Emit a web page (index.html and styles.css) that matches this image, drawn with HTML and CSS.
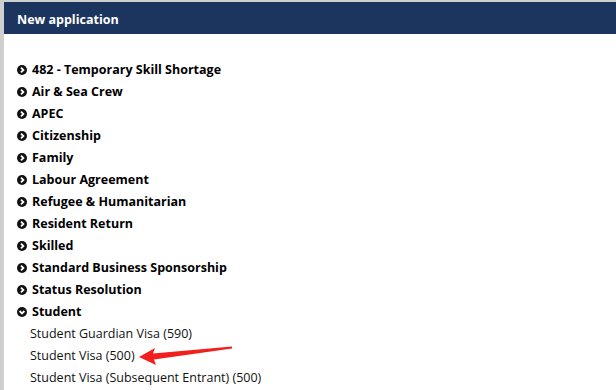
FILE: index.html
```html
<!DOCTYPE html>
<html lang="en">
<head>
    <meta charset="UTF-8">
    <title>New application</title>
    <link rel="stylesheet" href="styles.css">
</head>
<body>
<div id="panel">
    <div class="head">New application</div>
    <ul class="groups">
        <li><span class="ico"><svg viewBox="0 0 10 10"><circle cx="5" cy="5" r="5"/><path d="M4 2.6 6.4 5 4 7.4"/></svg></span>482 - Temporary Skill Shortage</li>
        <li><span class="ico"><svg viewBox="0 0 10 10"><circle cx="5" cy="5" r="5"/><path d="M4 2.6 6.4 5 4 7.4"/></svg></span>Air &amp; Sea Crew</li>
        <li><span class="ico"><svg viewBox="0 0 10 10"><circle cx="5" cy="5" r="5"/><path d="M4 2.6 6.4 5 4 7.4"/></svg></span>APEC</li>
        <li><span class="ico"><svg viewBox="0 0 10 10"><circle cx="5" cy="5" r="5"/><path d="M4 2.6 6.4 5 4 7.4"/></svg></span>Citizenship</li>
        <li><span class="ico"><svg viewBox="0 0 10 10"><circle cx="5" cy="5" r="5"/><path d="M4 2.6 6.4 5 4 7.4"/></svg></span>Family</li>
        <li><span class="ico"><svg viewBox="0 0 10 10"><circle cx="5" cy="5" r="5"/><path d="M4 2.6 6.4 5 4 7.4"/></svg></span>Labour Agreement</li>
        <li><span class="ico"><svg viewBox="0 0 10 10"><circle cx="5" cy="5" r="5"/><path d="M4 2.6 6.4 5 4 7.4"/></svg></span>Refugee &amp; Humanitarian</li>
        <li><span class="ico"><svg viewBox="0 0 10 10"><circle cx="5" cy="5" r="5"/><path d="M4 2.6 6.4 5 4 7.4"/></svg></span>Resident Return</li>
        <li><span class="ico"><svg viewBox="0 0 10 10"><circle cx="5" cy="5" r="5"/><path d="M4 2.6 6.4 5 4 7.4"/></svg></span>Skilled</li>
        <li><span class="ico"><svg viewBox="0 0 10 10"><circle cx="5" cy="5" r="5"/><path d="M4 2.6 6.4 5 4 7.4"/></svg></span>Standard Business Sponsorship</li>
        <li><span class="ico"><svg viewBox="0 0 10 10"><circle cx="5" cy="5" r="5"/><path d="M4 2.6 6.4 5 4 7.4"/></svg></span>Status Resolution</li>
        <li class="open"><span class="ico"><svg viewBox="0 0 10 10"><circle cx="5" cy="5" r="5"/><path d="M2.6 4 5 6.4 7.4 4"/></svg></span>Student</li>
    </ul>
    <ul class="sub">
        <li>Student Guardian Visa (590)</li>
        <li class="mark">Student Visa (500)
            <svg class="arrow" viewBox="0 0 94 20"><path d="M0 11 L16 2 L14 7.5 L93 0.5 L93 2.5 L15 13.5 L17 19 Z"/></svg>
        </li>
        <li>Student Visa (Subsequent Entrant) (500)</li>
    </ul>
</div>
</body>
</html>
```

FILE: styles.css
```css
*{
    margin: 0;
    padding: 0;
}
body{
    background: #cfcfcf;
    font-family: "Open Sans", "Liberation Sans", sans-serif;
    font-size: 12.5px;
    color: #000;
}
ul{
    list-style: none;
}
#panel{
    margin: 2px 0 0 4px;
    height: 388px;
    background: #fff;
    overflow: hidden;
}
#panel .head{
    background: #1c355e;
    color: #fff;
    font-weight: bold;
    height: 28px;
    line-height: 28px;
    padding: 4px 0 0 13px;
}
#panel .groups{
    padding: 25px 0 0 13px;
}
#panel .groups li{
    height: 22px;
    line-height: 22px;
    font-weight: bold;
    display: flex;
    align-items: center;
}
.ico{
    width: 15px;
    display: flex;
    align-items: center;
}
.ico svg{
    width: 10px;
    height: 10px;
}
.ico circle{
    fill: #111;
}
.ico path{
    fill: none;
    stroke: #fff;
    stroke-width: 1.8;
}
#panel .sub{
    padding-left: 26px;
}
#panel .sub li{
    height: 22px;
    line-height: 22px;
    color: #111;
}
.mark{
    position: relative;
}
.arrow{
    position: absolute;
    left: 109px;
    top: 1px;
    width: 94px;
    height: 20px;
    fill: #f21f1f;
}
```
